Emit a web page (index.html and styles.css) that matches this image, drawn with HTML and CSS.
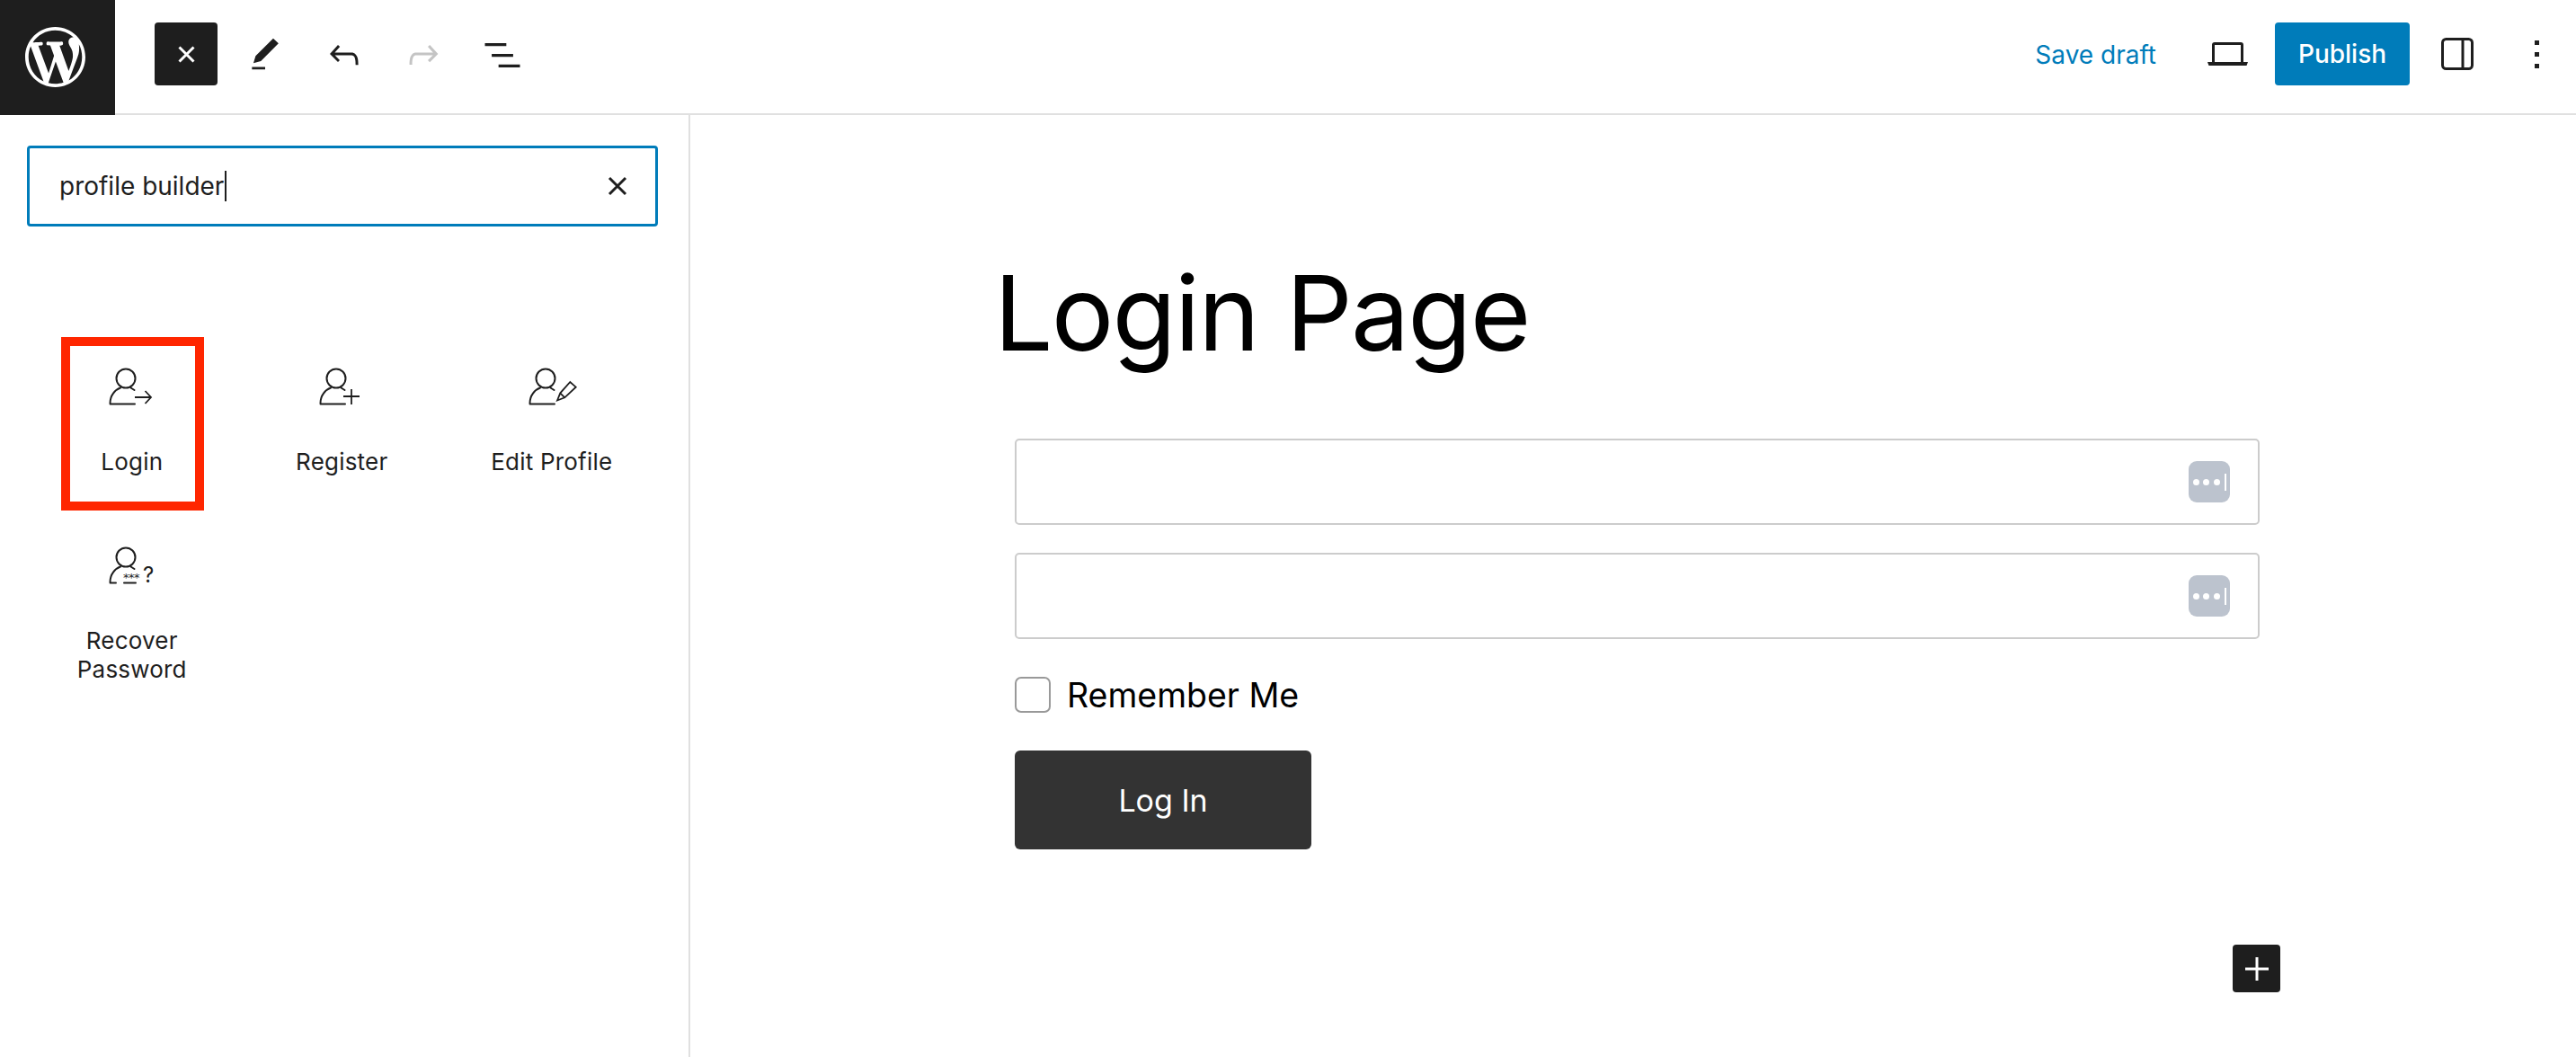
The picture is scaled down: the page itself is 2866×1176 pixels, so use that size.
FILE: index.html
```html
<!DOCTYPE html>
<html lang="en">
<head>
<meta charset="utf-8">
<title>Login Page</title>
<link rel="stylesheet" href="styles.css">
</head>
<body>
<div class="app">
  <header class="topbar">
    <a class="wp-logo"><svg viewBox="0 0 20 20" class="wp-mark"><path d="M20 10c0-5.51-4.49-10-10-10C4.48 0 0 4.49 0 10c0 5.52 4.48 10 10 10 5.51 0 10-4.48 10-10zM7.78 15.37L4.37 6.22c.55-.02 1.17-.08 1.17-.08.5-.06.44-1.13-.06-1.11 0 0-1.45.11-2.37.11-.18 0-.37 0-.58-.01C4.12 2.69 6.87 1.11 10 1.11c2.33 0 4.45.87 6.05 2.34-.68-.11-1.65.39-1.65 1.58 0 .74.45 1.36.9 2.1.35.61.55 1.36.55 2.46 0 1.49-1.4 5-1.4 5l-3.03-8.37c.54-.02.82-.17.82-.17.5-.05.44-1.25-.06-1.22 0 0-1.44.12-2.38.12-.87 0-2.33-.12-2.33-.12-.5-.03-.56 1.2-.06 1.22l.92.08 1.26 3.41zM17.41 10c.24-.64.74-1.87.43-4.25.7 1.29 1.05 2.71 1.05 4.25 0 3.29-1.73 6.24-4.4 7.78.97-2.59 1.94-5.2 2.92-7.78zM6.1 18.09C3.12 16.65 1.11 13.53 1.11 10c0-1.3.23-2.48.72-3.59C3.25 10.3 4.67 14.2 6.1 18.09zm4.03-6.63l2.58 6.98c-.86.29-1.76.45-2.71.45-.79 0-1.57-.11-2.29-.33.81-2.38 1.62-4.74 2.42-7.1z"/></svg></a>
    <div class="tools">
      <div class="tool"><span class="tool-active"><svg class="x-icon" viewBox="0 0 19 19"><path d="M1.500 1.500l16 16M17.500 1.500l-16 16"/></svg></span></div>
      <div class="tool"><svg class="icon44" viewBox="0 0 24 24"><path d="M20.100 5.100L16.900 2 6.200 12.700l-1.300 4.400 4.500-1.300L20.100 5.100zM4 20.800h8v-1.500H4v1.500z"/></svg></div>
      <div class="tool"><svg class="icon48" viewBox="0 0 24 24"><path d="M18.300 11.700c-.6-.6-1.400-.9-2.300-.9H6.700l2.900-3.300-1.100-1-4.500 5L8.500 16l1-1-2.700-2.700H16c.5 0 .9.2 1.300.5 1 1 1 3.400 1 4.500v.3h1.500v-.2c0-1.500 0-4.300-1.500-5.700z"/></svg></div>
      <div class="tool"><svg class="icon48 disabled" viewBox="0 0 24 24"><path d="M15.600 6.500l-1.100 1 2.900 3.300H8c-.9 0-1.700.3-2.300.9-1.400 1.500-1.400 4.200-1.400 5.600v.2h1.500v-.3c0-1.100 0-3.500 1-4.500.3-.3.7-.5 1.300-.5h9.200L14.500 15l1.100 1.100 4.600-4.600-4.600-5z"/></svg></div>
      <div class="tool"><svg class="icon52" viewBox="0 0 24 24"><path d="M3 6h11v1.500H3V6Zm3.500 5.500h11V13h-11v-1.500ZM21 17H10v1.500h11V17Z"/></svg></div>
    </div>
    <div class="actions">
      <span class="save-draft">Save draft</span>
      <svg class="laptop" viewBox="0 0 45 26"><path class="line" d="M6.500 24V3a1.500 1.500 0 0 1 1.500-1.500h29A1.500 1.500 0 0 1 38.500 3v21"/><path class="fill" d="M0 22h45l-1.500 4H1.500z"/></svg>
      <span class="publish">Publish</span>
      <svg class="panel" viewBox="0 0 36 36"><rect class="line" x="1.500" y="1.500" width="33" height="33" rx="4"/><path class="line" d="M24 1.500v33"/></svg>
      <svg class="dots" viewBox="0 0 5 31"><path d="M0 0h5v5H0zM0 13h5v5H0zM0 26h5v5H0z"/></svg>
    </div>
  </header>
  <div class="main">
    <aside class="sidebar">
      <div class="search">
        <span class="search-text">profile builder</span><span class="caret"></span>
        <svg class="search-clear" viewBox="0 0 22 22"><path d="M2 2l18 18M20 2L2 20"/></svg>
      </div>
      <div class="blocks">
        <div class="block">
          <svg class="block-icon" viewBox="0 0 60 48"><g class="user"><circle cx="20" cy="14" r="10.500"/><path d="M2.500 41.500C2.500 33 8 26.500 14 24.500M25.500 24.500l4 2.500M2.500 42.500H30"/></g><path class="user-stroke" d="M30 35H48M41.500 28L48 35L41.500 42"/></svg>
          <span class="block-label">Login</span>
          <span class="highlight"></span>
        </div>
        <div class="block">
          <svg class="block-icon" viewBox="0 0 60 48"><g class="user"><circle cx="20" cy="14" r="10.500"/><path d="M2.500 41.500C2.500 33 8 26.500 14 24.500M25.500 24.500l4 2.500M2.500 42.500H30"/></g><path class="user-stroke" d="M28 34H46M37 26V43"/></svg>
          <span class="block-label">Register</span>
        </div>
        <div class="block">
          <svg class="block-icon" viewBox="0 0 60 48"><g class="user"><circle cx="20" cy="14" r="10.500"/><path d="M2.500 41.500C2.500 33 8 26.500 14 24.500M25.500 24.500l4 2.500M2.500 42.500H30"/></g><path class="user-stroke" d="M33 38.500L36.300 30.300L47.300 18L53.700 23.700L41.300 35.300ZM36.300 30.300L41.300 35.300"/></svg>
          <span class="block-label">Edit Profile</span>
        </div>
        <div class="block">
          <svg class="block-icon" viewBox="0 0 60 48"><g class="user"><circle cx="20" cy="14" r="10.500"/><path d="M2.500 41.500C2.500 33 8 26.500 14 24.500M25.500 24.500l4 2.500M2.500 42.500H9M18 42.500H31"/></g><text class="stars" x="17" y="41">***</text><text class="question" x="39" y="42">?</text></svg>
          <span class="block-label">Recover Password</span>
        </div>
      </div>
    </aside>
    <section class="canvas">
      <h1 class="title">Login Page</h1>
      <form class="login-form">
        <div class="field"><span class="pw-icon"><i></i><i></i><i></i><b></b></span></div>
        <div class="field"><span class="pw-icon"><i></i><i></i><i></i><b></b></span></div>
        <label class="remember"><span class="checkbox"></span>Remember Me</label>
        <span class="login-btn">Log In</span>
      </form>
      <div class="appender"><svg viewBox="0 0 26 26"><path d="M13 0v26M0 13h26"/></svg></div>
    </section>
  </div>
</div>
</body>
</html>
```
FILE: styles.css
```css
* { box-sizing: border-box; }
html, body { margin: 0; padding: 0; background: #fff; }
body { font-family: Inter, "Liberation Sans", sans-serif; color: #1e1e1e; }
.app { width: 2866px; height: 1176px; overflow: hidden; display: flex; flex-direction: column; }

.topbar { height: 128px; flex: none; display: flex; align-items: flex-start; border-bottom: 2px solid #e0e0e0; }
.wp-logo { width: 128px; height: 128px; flex: none; background: #1e1e1e; display: flex; align-items: center; justify-content: center; }
.wp-mark { width: 67px; height: 67px; fill: #fff; margin-right: 6px; margin-bottom: 2px; }
.tools { display: flex; margin-left: 35px; }
.tool { width: 88px; height: 122px; display: flex; align-items: center; justify-content: center; }
.tool-active { width: 70px; height: 70px; border-radius: 4px; background: #1e1e1e; display: flex; align-items: center; justify-content: center; margin-top: -2px; }
.x-icon { width: 19px; height: 19px; fill: none; stroke: #fff; stroke-width: 3; }
.icon44 { width: 44px; height: 44px; fill: #1e1e1e; }
.icon48 { width: 48px; height: 48px; fill: #1e1e1e; }
.icon52 { width: 52px; height: 52px; fill: #1e1e1e; }
.icon48.disabled { fill: #c4c4c4; }

.actions { margin-left: auto; display: flex; align-items: center; height: 120px; }
.save-draft { font-size: 28px; color: #007cba; margin-right: 57px; line-height: 1; margin-top: 1px; }
.laptop { width: 45px; height: 26px; margin-right: 30px; }
.laptop .line, .panel .line { fill: none; stroke: #1e1e1e; stroke-width: 3; }
.laptop .fill { fill: #1e1e1e; }
.publish { width: 150px; height: 70px; border-radius: 4px; background: #007cba; color: #fff; font-size: 28px; font-weight: 500; display: flex; align-items: center; justify-content: center; margin-right: 35px; }
.panel { width: 36px; height: 36px; margin-right: 68px; }
.dots { width: 5px; height: 31px; fill: #1e1e1e; margin-right: 41px; }

.main { flex: 1; display: flex; min-height: 0; }
.sidebar { width: 768px; flex: none; border-right: 2px solid #e0e0e0; padding: 34px 34px 0 30px; }
.search { height: 90px; border: 3px solid #007cba; border-radius: 4px; display: flex; align-items: center; padding: 0 0 0 33px; position: relative; }
.search-text { font-size: 28px; color: #1e1e1e; line-height: 1; }
.caret { width: 2px; height: 34px; background: #1e1e1e; margin-left: 1px; }
.search-clear { width: 22px; height: 22px; margin-left: auto; margin-right: 31px; fill: none; stroke: #1e1e1e; stroke-width: 3; }

.blocks { display: grid; grid-template-columns: repeat(3, 233.500px); grid-auto-rows: 199px; margin-top: 123px; }
.block { position: relative; display: flex; flex-direction: column; align-items: center; padding-top: 32px; }
.block-icon { width: 60px; height: 48px; flex: none; margin-left: 7px; overflow: visible; }
.user circle, .user path, .user-stroke { fill: none; stroke: #1e1e1e; stroke-width: 2; stroke-linecap: round; }
.user-stroke { stroke-linecap: butt; stroke-width: 1.800; }
.stars { font-family: "DejaVu Sans", sans-serif; font-size: 13px; letter-spacing: -0.500px; fill: #1e1e1e; }
.question { font-family: Inter, sans-serif; font-size: 24px; fill: #1e1e1e; }
.block-label { margin-top: 43px; font-size: 26px; letter-spacing: 0.200px; line-height: 32px; text-align: center; width: 150px; color: #1e1e1e; }
.highlight { position: absolute; left: 38px; top: 0; width: 159px; height: 193px; border: 10px solid #ff2600; }

.canvas { flex: 1; padding: 0 0 0 338px; min-width: 0; }
.title { margin: 151px 0 0; font-size: 116px; letter-spacing: -1.800px; font-weight: 400; line-height: 139px; color: #000; }
.login-form { margin: 70px 0 0 23px; width: 1385px; display: flex; flex-direction: column; align-items: flex-start; }
.field { width: 100%; height: 96px; border: 2px solid #ccc; border-radius: 5px; margin-bottom: 31px; display: flex; align-items: center; justify-content: flex-end; padding-right: 31px; }
.pw-icon { width: 46px; height: 46px; border-radius: 9px; background: #bcc3ce; display: flex; align-items: center; padding-left: 4.500px; gap: 4.700px; }
.pw-icon i { width: 7px; height: 7px; border-radius: 50%; background: #fff; }
.pw-icon b { width: 2px; height: 19px; background: #fff; }
.remember { display: flex; align-items: center; font-size: 37.500px; color: #000; height: 40px; margin-top: 11px; }
.checkbox { width: 40px; height: 40px; border: 2px solid #999; border-radius: 7px; margin-right: 18px; }
.login-btn { width: 330px; height: 110px; margin-top: 42px; border-radius: 6px; background: #333; color: #fff; font-size: 34px; display: flex; align-items: center; justify-content: center; }
.appender { width: 53px; height: 53px; margin: 106px 0 0 1378px; border-radius: 4px; background: #1e1e1e; display: flex; align-items: center; justify-content: center; }
.appender svg { width: 26px; height: 26px; fill: none; stroke: #fff; stroke-width: 3; }
```
